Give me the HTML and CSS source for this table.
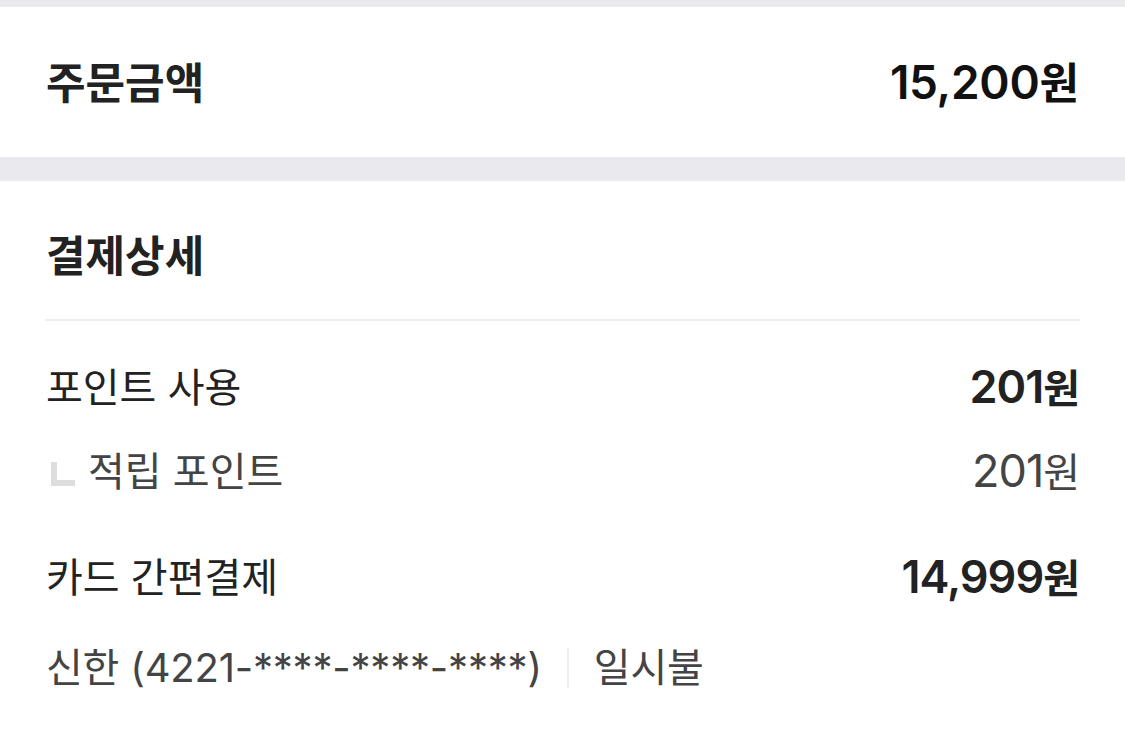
FILE: index.html
```html
<!DOCTYPE html>
<html lang="ko">
<head>
<meta charset="utf-8">
<link rel="stylesheet" href="styles.css">
</head>
<body>
<div class="band band-top"></div>
<section class="order">
  <span class="order-label">주문금액</span>
  <span class="order-value"><span class="num">15,200</span>원</span>
</section>
<div class="band band-mid"></div>
<section class="detail">
  <h2 class="detail-title">결제상세</h2>
  <div class="divider"></div>
  <div class="group group-points">
    <div class="row">
      <span class="label">포인트 사용</span>
      <span class="value strong"><span class="num">201</span>원</span>
    </div>
    <div class="row sub">
      <span class="label sub-label"><span class="corner"></span>적립 포인트</span>
      <span class="value"><span class="num">201</span>원</span>
    </div>
  </div>
  <div class="group group-card">
    <div class="row">
      <span class="label">카드 간편결제</span>
      <span class="value strong"><span class="num">14,999</span>원</span>
    </div>
    <div class="row sub">
      <span class="label card-info">신한 (4221-****-****-****)<span class="sep"></span>일시불</span>
    </div>
  </div>
</section>
</body>
</html>
```

FILE: styles.css
```css
* { box-sizing: border-box; }
body {
  margin: 0;
  background: #fff;
  font-family: Inter, "Noto Sans CJK KR", sans-serif;
  color: #222;
}
.band { background: #e9e9ee; }
.band-top { height: 7px; }
.band-mid { height: 24px; }
.order {
  height: 150px;
  padding: 0 46px 0 46px;
  display: flex;
  align-items: center;
  justify-content: space-between;
}
.order-label {
  font-size: 43px;
  font-weight: 700;
  color: #222;
  line-height: 50px;
  padding-top: 2px;
}
.order-value {
  font-size: 43px;
  font-weight: 600;
  color: #111;
  line-height: 50px;
}
.order-value .num { font-size: 46px; letter-spacing: -0.3px; }
.detail { padding: 0 45px 0 45px; }
.detail-title {
  margin: 0;
  padding: 50px 0 38px 1px;
  font-size: 43px;
  font-weight: 700;
  line-height: 50px;
  color: #222;
}
.divider { height: 2px; background: #eeeeee; }
.group { display: flex; flex-direction: column; }
.group-points { margin-top: 43px; gap: 36px; }
.group-card { margin-top: 58px; gap: 42px; }
.row {
  display: flex;
  justify-content: space-between;
  align-items: center;
  line-height: 48px;
  height: 48px;
  font-size: 40px;
  padding-left: 1px;
}
.label { color: #222; display: flex; align-items: center; }
.value { color: #444; }
.value .num { font-size: 45px; letter-spacing: -1px; }
.value.strong { color: #222; font-weight: 600; }
.sub .label, .sub .value { color: #444; }
.corner {
  width: 24px;
  height: 24px;
  border-left: 6px solid #dddddd;
  border-bottom: 6px solid #dddddd;
  margin: 4px 13px 0 5px;
}
.card-info { letter-spacing: -0.2px; }
.sep {
  width: 2px;
  height: 40px;
  background: #eeeeee;
  margin: 0 25px 0 25px;
}
```
